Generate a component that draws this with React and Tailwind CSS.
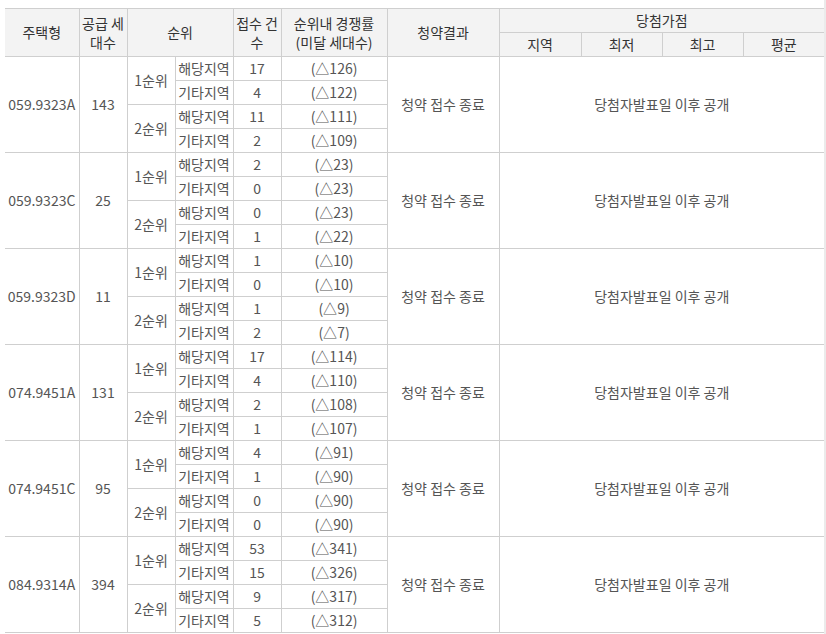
import React from "react";

const groups = [
  { type: "059.9323A", supply: "143", rows: [["17", "126"], ["4", "122"], ["11", "111"], ["2", "109"]] },
  { type: "059.9323C", supply: "25", rows: [["2", "23"], ["0", "23"], ["0", "23"], ["1", "22"]] },
  { type: "059.9323D", supply: "11", rows: [["1", "10"], ["0", "10"], ["1", "9"], ["2", "7"]] },
  { type: "074.9451A", supply: "131", rows: [["17", "114"], ["4", "110"], ["2", "108"], ["1", "107"]] },
  { type: "074.9451C", supply: "95", rows: [["4", "91"], ["1", "90"], ["0", "90"], ["0", "90"]] },
  { type: "084.9314A", supply: "394", rows: [["53", "341"], ["15", "326"], ["9", "317"], ["5", "312"]] },
];

const td = "border border-[#cfcfcf] text-center align-middle pt-0 px-0 pb-[2px] leading-[16px]";
const th = "border border-[#cfcfcf] text-center align-middle p-0 font-normal text-[#333] leading-[19px]";

export default function App() {
  return (
    <div
      className="flex w-[826px] h-[634px] bg-white text-[14px] text-[#555]"
      style={{ fontFamily: '"Noto Sans CJK KR", "Noto Sans", sans-serif' }}
    >
      <div className="flex-1 pl-[5px] pt-[8px]">
        <table className="table-fixed border-collapse w-[819px]">
          <colgroup>
            <col className="w-[74px]" />
            <col className="w-[48px]" />
            <col className="w-[48px]" />
            <col className="w-[58px]" />
            <col className="w-[48px]" />
            <col className="w-[106px]" />
            <col className="w-[112px]" />
            <col className="w-[82px]" />
            <col className="w-[81px]" />
            <col className="w-[81px]" />
            <col className="w-[81px]" />
          </colgroup>
          <thead className="bg-[#f3f3f3]">
            <tr className="h-[24px]">
              <th rowSpan={2} className={th + " border-l-0"}>주택형</th>
              <th rowSpan={2} className={th}>공급 세<br />대수</th>
              <th rowSpan={2} colSpan={2} className={th}>순위</th>
              <th rowSpan={2} className={th}>접수 건<br />수</th>
              <th rowSpan={2} className={th}>순위내 경쟁률<br />(미달 세대수)</th>
              <th rowSpan={2} className={th}>청약결과</th>
              <th colSpan={4} className={th + " border-r-0"}>당첨가점</th>
            </tr>
            <tr className="h-[24px]">
              <th className={th}>지역</th>
              <th className={th}>최저</th>
              <th className={th}>최고</th>
              <th className={th + " border-r-0"}>평균</th>
            </tr>
          </thead>
          <tbody>
            {groups.map((g) =>
              g.rows.map((r, i) => (
                <tr key={g.type + i} className="h-[24px]">
                  {i === 0 && (
                    <>
                      <td rowSpan={4} className={td + " border-l-0"}>{g.type}</td>
                      <td rowSpan={4} className={td}>{g.supply}</td>
                    </>
                  )}
                  {i % 2 === 0 && (
                    <td rowSpan={2} className={td}>{i === 0 ? "1순위" : "2순위"}</td>
                  )}
                  <td className={td}>{i % 2 === 0 ? "해당지역" : "기타지역"}</td>
                  <td className={td}>{r[0]}</td>
                  <td className={td}>(△{r[1]})</td>
                  {i === 0 && (
                    <>
                      <td rowSpan={4} className={td}>청약 접수 종료</td>
                      <td rowSpan={4} colSpan={4} className={td + " border-r-0"}>당첨자발표일 이후 공개</td>
                    </>
                  )}
                </tr>
              ))
            )}
          </tbody>
        </table>
      </div>
      <div className="w-[2px] h-full bg-[#ebebeb]" />
    </div>
  );
}
